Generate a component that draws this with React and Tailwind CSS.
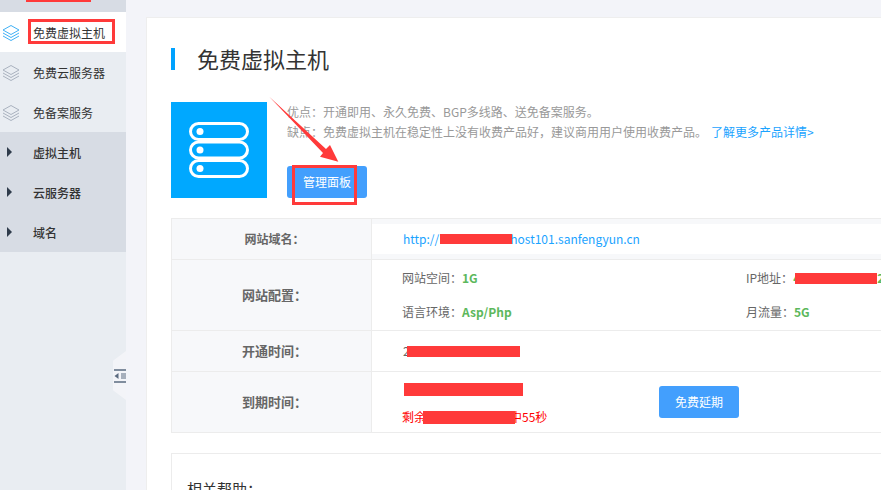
const cjk = { fontFamily: '"Noto Sans CJK SC", "Noto Sans", sans-serif' };

function Layers({ active }) {
    const c = active ? "#3fb0f5" : "#a9b2bf";
    return (
        <svg width="18" height="18" viewBox="0 0 18 18" fill="none" stroke={c} strokeWidth="1" className="shrink-0 mt-[2px]">
            <path d="M9 1.5 17 6 9 10.500 1 6Z" />
            <path d="M1 9 9 13.500 17 9" />
            <path d="M1 12 9 16.500 17 12" />
        </svg>
    );
}

function Caret() {
    return <span className="w-0 h-0 border-y-[5px] border-y-transparent border-l-[5px] border-l-[#2f3b4b]" />;
}

function SubItem({ label, active }) {
    return (
        <div className={`flex items-center h-10 pl-[2px] text-[12px] text-[#333] ${active ? "bg-white" : ""}`}>
            <Layers active={active} />
            <span className="ml-[13px] pt-[2px]">{label}</span>
        </div>
    );
}

function GroupItem({ label }) {
    return (
        <div className="flex items-center h-10 pl-[7px] text-[12px] text-[#333] font-medium">
            <Caret />
            <span className="ml-[21px] pt-[2px]">{label}</span>
        </div>
    );
}

function Sidebar() {
    return (
        <aside className="relative w-[126px] shrink-0 bg-[#e9edf2]">
            <div className="h-3 bg-[#d7dce4]" />
            <SubItem label="免费虚拟主机" active />
            <SubItem label="免费云服务器" />
            <SubItem label="免备案服务" />
            <div className="bg-[#d7dce4]">
                <GroupItem label="虚拟主机" />
                <GroupItem label="云服务器" />
                <GroupItem label="域名" />
            </div>
            {/* collapse handle */}
            <div className="absolute right-0 top-[351px] w-[13px] h-[49px] bg-[#f3f4f8] [clip-path:polygon(100%_0,100%_100%,0_80%,0_20%)] flex items-center justify-center">
                <svg width="13" height="14" viewBox="0 0 13 14">
                    <path d="M1 1h12M1 13h12" stroke="#5b6b80" strokeWidth="1.500" />
                    <path d="M5.500 4 1.500 7l4 3Z" fill="#5b6b80" />
                    <path d="M8 5h5M8 7h5M8 9h5" stroke="#5b6b80" strokeWidth="1" />
                </svg>
            </div>
        </aside>
    );
}

function ServerIcon() {
    return (
        <svg width="60" height="56" viewBox="0 0 60 56" fill="none" stroke="#fff" strokeWidth="3">
            <rect x="1.500" y="1.500" width="57" height="16" rx="8" />
            <rect x="1.500" y="20" width="57" height="16" rx="8" />
            <rect x="1.500" y="38.500" width="57" height="16" rx="8" />
            <circle cx="11" cy="9.500" r="3.500" fill="#fff" stroke="none" />
            <circle cx="11" cy="28" r="3.500" fill="#fff" stroke="none" />
            <circle cx="11" cy="46.500" r="3.500" fill="#fff" stroke="none" />
        </svg>
    );
}

function Row({ label, height, size = "text-[12px]", children, last }) {
    return (
        <div className={`grid grid-cols-[200px_1fr] ${height} ${last ? "" : "border-b border-[#ececec]"}`}>
            <div className={`flex items-center justify-center pl-[6px] bg-[#f7f8fa] border-r border-[#ececec] font-bold text-[#666] ${size}`}>
                {label}
            </div>
            {children}
        </div>
    );
}

function Red({ className }) {
    return <span className={`relative inline-block bg-[#ff3a3a] ${className}`} />;
}

function Green({ children }) {
    return <b className="text-[#5cb85c] font-bold">{children}</b>;
}

export default function App() {
    return (
        <div className="relative flex w-[881px] h-[490px] overflow-hidden bg-[#f3f4f9]" style={cjk}>
            <Sidebar />
            <main className="pl-5 pt-[17px]">
                <div className="w-[800px] h-[520px] bg-white border border-[#eeeeee] pl-6 pt-[30px]">
                    <div className="flex items-center h-[22px] border-l-4 border-[#00a2ff] pl-[22px] pb-[2px] text-[22px] text-[#333]">
                        免费虚拟主机
                    </div>

                    <div className="flex mt-8">
                        <div className="w-24 h-24 bg-[#00a8ff] flex items-center justify-center">
                            <ServerIcon />
                        </div>
                        <div className="ml-5">
                            <p className="text-[12px] leading-5 text-[#999]">优点：开通即用、永久免费、BGP多线路、送免备案服务。</p>
                            <p className="text-[12px] leading-5 text-[#999]">
                                缺点：免费虚拟主机在稳定性上没有收费产品好，建议商用用户使用收费产品。
                                <a className="ml-[4px] text-[#1aa3ff]">了解更多产品详情&gt;</a>
                            </p>
                            <button className="mt-6 w-20 h-8 rounded-[3px] bg-[#439ffd] text-white text-[12px]">管理面板</button>
                        </div>
                    </div>

                    <div className="mt-5 border border-[#ececec]">
                        <Row label="网站域名：" height="h-[41px]">
                            <div className="bg-[#f7f8fa] py-[5px]">
                                <div className="h-[30px] bg-white flex items-center pl-[31px] text-[12px] text-[#1aa3ff]">
                                    http://<Red className="ml-[1px] -mr-[2px] w-[72px] h-[10px]" />host101.sanfengyun.cn
                                </div>
                            </div>
                        </Row>
                        <Row label="网站配置：" height="h-[71px]" size="text-[13px]">
                            <div className="grid grid-cols-[344px_1fr] grid-rows-2 pl-[30px] py-[1px] text-[12px] text-[#666]">
                                <div className="flex items-center">网站空间：<Green>1G</Green></div>
                                <div className="flex items-center whitespace-nowrap">IP地址：<b className="text-[#5cb85c]">4</b><Red className="-ml-[5px] w-[82px] h-[11px]" /><b className="text-[#5cb85c]">2</b></div>
                                <div className="flex items-center">语言环境：<Green>Asp/Php</Green></div>
                                <div className="flex items-center">月流量：<Green>5G</Green></div>
                            </div>
                        </Row>
                        <Row label="开通时间：" height="h-[41px]" size="text-[13px]">
                            <div className="flex items-center pl-[31px] text-[12px] text-[#666]">
                                2<Red className="-ml-[3px] w-[113px] h-[11px]" />
                            </div>
                        </Row>
                        <Row label="到期时间：" height="h-[60px]" size="text-[13px]" last>
                            <div className="flex items-center pl-[30px]">
                                <div className="w-[257px]">
                                    <Red className="block ml-[2px] w-[119px] h-[13px]" />
                                    <div className="mt-[6px] flex items-center text-[12px] leading-5 text-[#ff0000]">
                                        剩余<Red className="-ml-[3px] -mr-[5px] w-[92px] h-[13px]" />中55秒
                                    </div>
                                </div>
                                <button className="w-20 h-8 rounded-[3px] bg-[#439ffd] text-white text-[12px]">免费延期</button>
                            </div>
                        </Row>
                    </div>

                    <div className="mt-5 border border-[#ececec] h-[80px] pl-[15px] pt-[24px] text-[15px] text-[#333]">相关帮助：</div>
                </div>
            </main>

            {/* red annotations drawn on the screenshot */}
            <div className="absolute left-[26px] top-0 w-[65px] h-[2px] bg-[#ff3a3a]" />
            <div className="absolute left-[28px] top-[19px] w-[87px] h-[25px] border-[3px] border-[#ff3a3a]" />
            <div className="absolute left-[292px] top-[165px] w-[65px] h-[40px] border-[3px] border-[#ff3a3a]" />
            <svg className="absolute left-[260px] top-[90px]" width="90" height="80" viewBox="0 0 90 80">
                <path d="M9.300 6.700 66 59 70 55 78.300 71.700 60 66.700 63 63Z" fill="#ff3a3a" />
            </svg>
        </div>
    );
}
